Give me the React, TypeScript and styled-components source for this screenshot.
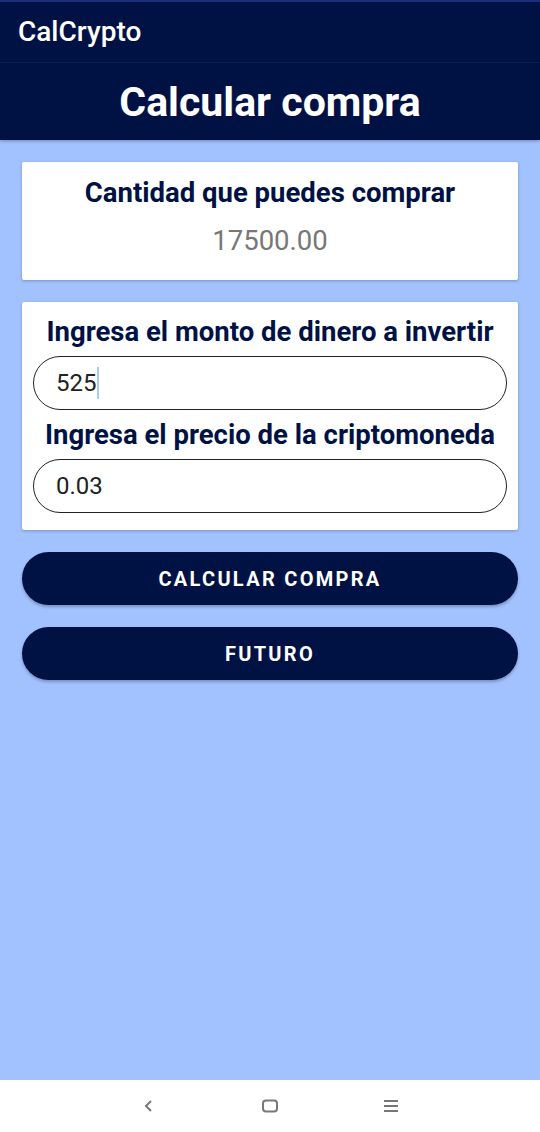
import React from "react";
import styled, { createGlobalStyle } from "styled-components";

const Global = createGlobalStyle`
  html, body { margin: 0; padding: 0; }
  body { font-family: Roboto, "Noto Sans", "Liberation Sans", sans-serif; background: #a1c1ff; }
  * { box-sizing: border-box; }
`;

const Screen = styled.div`
  width: 540px;
  height: 1132px;
  display: flex;
  flex-direction: column;
  background: #a1c1ff;
`;

const AppBar = styled.div`
  height: 62px;
  background: #001244;
  border-top: 2px solid #1b2d80;
  display: flex;
  align-items: center;
  padding: 0 18px 2px;
  color: #fff;
  font-size: 28px;
  font-weight: 500;
`;

const TitleBar = styled.div`
  height: 78px;
  background: #001244;
  border-top: 1px solid #0d1d52;
  display: flex;
  align-items: center;
  justify-content: center;
  color: #fff;
  font-size: 41px;
  font-weight: 700;
  box-shadow: 0 1px 3px rgba(0, 0, 0, 0.3);
`;

const Content = styled.main`
  flex: 1;
  display: flex;
  flex-direction: column;
  padding: 22px 22px 0;
  gap: 22px;
`;

const Card = styled.section<{ $pad: string }>`
  background: #fff;
  border-radius: 2px;
  box-shadow: 0 1px 3px rgba(0, 0, 0, 0.25);
  display: flex;
  flex-direction: column;
  align-items: stretch;
  padding: ${(p) => p.$pad};
`;

const Label = styled.div`
  color: #001244;
  font-size: 27.5px;
  font-weight: 700;
  text-align: center;
  line-height: 32px;
  white-space: nowrap;
`;

const Value = styled.div`
  color: #777;
  font-size: 27.5px;
  text-align: center;
  line-height: 32px;
  margin-top: 16px;
`;

const Field = styled.div<{ $last?: boolean }>`
  height: 54px;
  border: 1px solid #222;
  border-radius: 27px;
  display: flex;
  align-items: center;
  padding: 0 22px;
  font-size: 24px;
  color: #222;
  margin: 8px 0 ${(p) => (p.$last ? 0 : 9)}px;
`;

const Caret = styled.span`
  display: inline-block;
  width: 2px;
  height: 32px;
  background: #a8cdf0;
  margin-left: 1px;
`;

const Button = styled.button`
  height: 53px;
  border: none;
  border-radius: 27px;
  background: #001244;
  color: #fff;
  font-family: Roboto, "Liberation Sans", sans-serif;
  font-size: 20px;
  font-weight: 700;
  letter-spacing: 2.3px;
  padding: 0;
  box-shadow: 0 2px 3px rgba(0, 0, 0, 0.25);
`;

const NavBar = styled.nav`
  height: 52px;
  background: #fff;
  display: flex;
  align-items: center;
  justify-content: center;
`;

const NavSlot = styled.div`
  width: 121px;
  display: flex;
  justify-content: center;
`;

export default function App() {
  return (
    <>
      <Global />
      <Screen>
        <AppBar>CalCrypto</AppBar>
        <TitleBar>Calcular compra</TitleBar>
        <Content>
          <Card $pad="15px 12px 23px">
            <Label>Cantidad que puedes comprar</Label>
            <Value>17500.00</Value>
          </Card>
          <Card $pad="14px 11px 17px">
            <Label>Ingresa el monto de dinero a invertir</Label>
            <Field>
              525<Caret />
            </Field>
            <Label>Ingresa el precio de la criptomoneda</Label>
            <Field $last>0.03</Field>
          </Card>
          <Button>CALCULAR COMPRA</Button>
          <Button>FUTURO</Button>
        </Content>
        <NavBar>
          <NavSlot>
            <svg width="12" height="14" viewBox="0 0 12 14">
              <path d="M8 2 L3 7 L8 12" fill="none" stroke="#777" strokeWidth="2" />
            </svg>
          </NavSlot>
          <NavSlot>
            <svg width="18" height="14" viewBox="0 0 18 14">
              <rect x="2" y="1.5" width="14" height="11" rx="3" fill="none" stroke="#777" strokeWidth="2" />
            </svg>
          </NavSlot>
          <NavSlot>
            <svg width="16" height="14" viewBox="0 0 16 14">
              <path d="M1 2 H15 M1 7 H15 M1 12 H15" stroke="#777" strokeWidth="1.8" />
            </svg>
          </NavSlot>
        </NavBar>
      </Screen>
    </>
  );
}
